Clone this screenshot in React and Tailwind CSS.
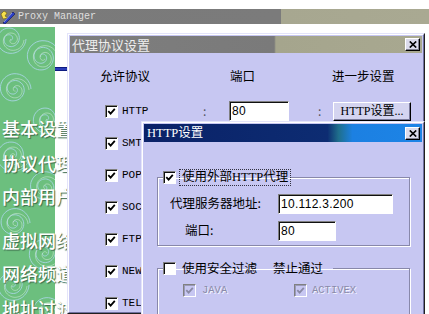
import React from "react";

const LAV = "bg-[#c7c7f2]";

function spiral(cx, cy, r, turns, dir) {
  const steps = Math.round(turns * 36);
  let d = "";
  for (let i = 0; i <= steps; i++) {
    const t = (i / 36) * Math.PI * 2 * dir;
    const rr = r * (1 - i / (steps + 6));
    const x = cx + rr * Math.cos(t);
    const y = cy + rr * Math.sin(t);
    d += (i === 0 ? "M" : "L") + x.toFixed(1) + " " + y.toFixed(1) + " ";
  }
  return d;
}

const swirls = [
  [10, 12, 16, 2.2, 1],
  [42, 30, 18, 2.5, -1],
  [14, 62, 17, 2.3, -1],
  [46, 92, 16, 2.2, 1],
  [12, 128, 18, 2.5, 1],
  [44, 160, 17, 2.2, -1],
  [14, 196, 16, 2.4, -1],
  [44, 226, 18, 2.5, 1],
  [12, 258, 17, 2.3, 1],
  [46, 285, 16, 2.2, -1],
];

function GreenPattern() {
  return (
    <svg className="absolute inset-0" width="55" height="287" viewBox="0 0 55 287">
      {swirls.map(([cx, cy, r, t, dir], i) => (
        <g key={i} fill="none">
          <path d={spiral(cx, cy, r, t, dir)} stroke="#a9d6e6" strokeWidth="1" opacity="0.85" />
          <path d={spiral(cx + 2, cy + 1, r - 4, t - 0.6, dir)} stroke="#dff2e6" strokeWidth="0.8" opacity="0.6" />
        </g>
      ))}
    </svg>
  );
}

function AppIcon() {
  return (
    <svg width="16" height="14" viewBox="0 0 16 14" className="shrink-0">
      <path d="M1 4 L4 1 L7 3 L5 6 L8 8 L3 9 Z" fill="#f6e04a" stroke="#6b5a10" strokeWidth="0.6" />
      <path d="M3 13 L13 2 L15 4 L5 14 Z" fill="#2a3fc8" stroke="#0b1050" strokeWidth="0.6" />
      <path d="M4 12 L12 3" stroke="#9fb0ff" strokeWidth="0.8" />
    </svg>
  );
}

function CloseBtn() {
  return (
    <span className="w-[15px] h-[13px] shrink-0 flex items-center justify-center bg-[#dcdcec] border border-t-white border-l-white border-r-black border-b-black shadow-[inset_-1px_-1px_0_#808090]">
      <svg width="8" height="7" viewBox="0 0 8 7">
        <path d="M0.8 0.5 L7.2 6.5 M7.2 0.5 L0.8 6.5" stroke="black" strokeWidth="1.7" />
      </svg>
    </span>
  );
}

function Check({ checked, disabled }) {
  return (
    <span
      className={`w-[13px] h-[13px] shrink-0 flex items-center justify-center border border-t-[#808080] border-l-[#808080] border-r-white border-b-white ${
        disabled ? "bg-[#c7c7f2] shadow-[inset_1px_1px_0_#9a9ab8]" : "bg-white shadow-[inset_1px_1px_0_#101010]"
      }`}
    >
      {checked && (
        <svg width="9" height="9" viewBox="0 0 9 9">
          <path
            d="M1.3 4.2 L3.6 6.6 L7.8 1.8"
            fill="none"
            stroke={disabled ? "#8a8aa6" : "black"}
            strokeWidth="1.8"
          />
        </svg>
      )}
    </span>
  );
}

function Field({ value, className }) {
  return (
    <div
      className={`${className} h-[20px] shrink-0 flex items-center pl-[2px] bg-white border border-t-[#808080] border-l-[#808080] border-r-white border-b-white shadow-[inset_1px_1px_0_#101010] font-['Liberation_Sans',sans-serif] text-[12px] tracking-[0.3px]`}
    >
      {value}
    </div>
  );
}

const sideLabels = [
  ["基本设置", "mt-[92px]"],
  ["协议代理", "mt-[17px]"],
  ["内部用户", "mt-[15px]"],
  ["虚拟网络", "mt-[26px]"],
  ["网络频道", "mt-[15px]"],
  ["地址过滤", "mt-[17px]"],
];

const protocols = ["HTTP", "SMTP", "POP3", "SOCKS", "FTP", "NEWS", "TELNET"];

export default function App() {
  return (
    <div className="w-[429px] h-[314px] overflow-hidden bg-white relative font-['Noto_Sans_CJK_SC',sans-serif] text-[12px] leading-none text-black">
      <div className="h-[9px]" />
      <div className="h-[15px] flex items-center bg-[linear-gradient(90deg,#7a7a7a_0%,#7b7b7b_65.4%,#a7a790_65.6%,#a9a992_100%)]">
        <AppIcon />
        <span className="ml-[2px] font-['Liberation_Mono',monospace] text-[10px] text-[#dedede]">Proxy Manager</span>
      </div>
      <div className="h-[3px]" />

      <div className="flex h-[287px]">
        <aside className="w-[55px] shrink-0 bg-[#6cbf7e] relative">
          <GreenPattern />
          <div className="relative flex flex-col pl-[2px] text-[18px] leading-[18px] font-medium text-white whitespace-nowrap [text-shadow:1px_1px_1px_#3d6a4c]">
            {sideLabels.map(([t, m]) => (
              <span key={t} className={m}>
                {t}
              </span>
            ))}
          </div>
        </aside>

        <div className="w-[12px] shrink-0">
          <div className="mt-[40px] h-[4px] bg-[#2a3cb8] border-y border-[#0c1a80]" />
        </div>

        <div className="relative z-10 flex-1 pt-[6px] pr-[4px]">
          <div className={`h-full border border-t-[#e4e4fa] border-l-[#e4e4fa] border-r-[#202020] border-b-[#202020] ${LAV}`}>
            <div className="h-full border border-t-white border-l-white border-r-[#7070a0] border-b-[#7070a0] p-px">
              <div className="h-[17px] flex items-center justify-between pl-[2px] pr-[2px] bg-[linear-gradient(90deg,#7e7e7e_0%,#7a7a7a_58%,#a5a58d_58.5%,#a8a890_100%)]">
                <span className="text-[13px] text-[#eeeeee]">代理协议设置</span>
                <CloseBtn />
              </div>

              <div className="mt-[16px] h-[14px] flex items-center pl-[30px] text-[12.5px]">
                <span className="w-[130px]">允许协议</span>
                <span className="w-[102px]">端口</span>
                <span>进一步设置</span>
              </div>

              <div className="mt-[12px] flex flex-col">
                {protocols.map((p, i) => (
                  <div key={p} className="h-[32px] flex items-center pl-[35px]">
                    <Check checked />
                    <span className="ml-[4px] w-[81px] font-['Liberation_Mono',monospace] text-[11px] whitespace-nowrap">
                      {p}
                    </span>
                    {i === 0 && (
                      <>
                        <span className="w-[26px] text-[#505060]">:</span>
                        <Field value="80" className="w-[60px]" />
                        <span className="w-[29px]" />
                        <span className="w-[15px] text-[#505060]">:</span>
                        <button className="w-[78px] h-[19px] flex items-center justify-center bg-[#d4d4f0] border border-t-white border-l-white border-r-black border-b-black shadow-[inset_-1px_-1px_0_#7a7a9a] font-['Liberation_Serif','Noto_Sans_CJK_SC',serif] text-[12px]">
                          HTTP设置...
                        </button>
                      </>
                    )}
                  </div>
                ))}
              </div>
            </div>
          </div>
        </div>
      </div>

      <div className={`absolute left-[141px] top-[121px] w-[284px] h-[200px] z-20 border border-t-[#e4e4fa] border-l-[#e4e4fa] border-r-[#202020] border-b-[#202020] ${LAV}`}>
        <div className="h-full border border-t-white border-l-white border-r-[#7070a0] border-b-[#7070a0] p-px">
          <div className="h-[18px] flex items-center justify-between pl-[3px] pr-[2px] bg-[linear-gradient(90deg,#0a2268_0%,#0d2c72_66%,#1f6f8c_70%,#1c80e2_75%,#1d84e6_100%)]">
            <span className="text-white font-['Liberation_Serif','Noto_Sans_CJK_SC',serif] text-[12.5px]">HTTP设置</span>
            <CloseBtn />
          </div>

          <div className="pl-[13px] pr-[12px]">
            <fieldset className="mt-[27px] border border-[#8888aa] shadow-[inset_1px_1px_0_white,1px_1px_0_white] pb-[4px]">
              <legend className="ml-[5px] flex items-center">
                <Check checked />
                <span className="ml-[3px] px-[2px] py-[1px] border border-dotted border-[#303040] font-['Liberation_Serif','Noto_Sans_CJK_SC',serif] text-[12.5px]">
                  使用外部HTTP代理
                </span>
              </legend>
              <div className="pt-[8px] flex flex-col gap-[7px]">
                <div className="flex items-center">
                  <span className="w-[120px] pl-[12px] text-[12.5px]">代理服务器地址:</span>
                  <Field value="10.112.3.200" className="w-[115px]" />
                </div>
                <div className="flex items-center">
                  <span className="w-[120px] pl-[27px] text-[12.5px]">端口:</span>
                  <Field value="80" className="w-[58px]" />
                </div>
              </div>
            </fieldset>

            <fieldset className="mt-[16px] h-[80px] border border-[#8888aa] shadow-[inset_1px_1px_0_white,1px_1px_0_white]">
              <legend className="ml-[5px] pr-[10px] flex items-center text-[12.5px]">
                <Check />
                <span className="ml-[6px]">使用安全过滤</span>
                <span className="ml-[16px]">禁止通过</span>
              </legend>
              <div className="pt-[9px] pl-[25px] flex items-center">
                <div className="w-[111px] flex items-center">
                  <Check checked disabled />
                  <span className="ml-[6px] font-['Liberation_Mono',monospace] text-[10.5px] text-[#8a8aa8] [text-shadow:1px_1px_0_#f4f4ff]">JAVA</span>
                </div>
                <div className="flex items-center">
                  <Check checked disabled />
                  <span className="ml-[5px] font-['Liberation_Mono',monospace] text-[10.5px] text-[#8a8aa8] [text-shadow:1px_1px_0_#f4f4ff]">ACTIVEX</span>
                </div>
              </div>
            </fieldset>
          </div>
        </div>
      </div>
    </div>
  );
}
